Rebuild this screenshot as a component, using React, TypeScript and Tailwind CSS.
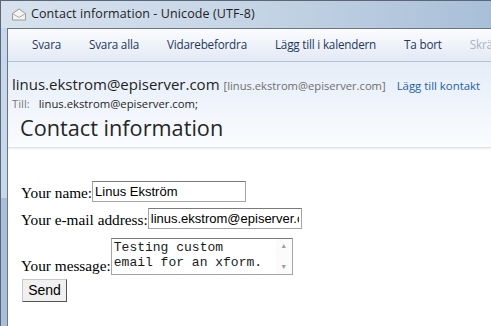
import React from "react"

const ui = { fontFamily: '"Open Sans", "Noto Sans", sans-serif' }
const serif = { fontFamily: '"Liberation Serif", serif' }
const sans = { fontFamily: '"Liberation Sans", Arial, sans-serif' }

function Envelope() {
  return (
    <svg width="16" height="13" viewBox="0 0 16 13">
      <path d="M1.5 5.5 L8 1 L14.5 5.5 L14.5 12 L1.5 12 Z" fill="#f4f4f2" stroke="#9a9a96" strokeWidth="1" />
      <path d="M1.5 5.5 L8 9.5 L14.5 5.5" fill="none" stroke="#a8a8a4" strokeWidth="1" />
    </svg>
  )
}

const tools = ["Svara", "Svara alla", "Vidarebefordra", "Lägg till i kalendern", "Ta bort"]

export default function App() {
  return (
    <div className="w-[491px] h-[326px] overflow-hidden flex flex-col bg-[#c9d8ea] border-l border-t border-[#5b6677]" style={ui}>
      {/* title bar */}
      <div className="h-[27px] flex items-center pl-[10px] bg-gradient-to-r from-[#d7e2ee] via-[#c6d5e6] to-[#a9bfd8] shrink-0">
        <Envelope />
        <span className="ml-[4px] text-[12.5px] text-[#1e1e1e] tracking-[0.1px]">Contact information - Unicode (UTF-8)</span>
      </div>

      <div className="flex flex-1 min-h-0">
        {/* left frame */}
        <div className="w-[6px] shrink-0 flex flex-col">
          <div className="h-[170px] bg-[#c8d8ec]" />
          <div className="flex-1 bg-[#a8bedb]" />
        </div>

        <div className="flex-1 flex flex-col border-l border-t border-[#6b7584] bg-white min-w-0">
          {/* toolbar */}
          <div className="h-[33px] flex items-center pl-[24px] gap-[28px] whitespace-nowrap text-[11.7px] tracking-[-0.2px] text-[#1e395b] bg-gradient-to-b from-[#fbfcfe] to-[#e3eaf4] border-b border-[#b6c3d4] shrink-0 overflow-hidden">
            {tools.map(t => (
              <span key={t}>{t}</span>
            ))}
            <span className="text-[#a9b4c2]">Skräp</span>
          </div>

          {/* header */}
          <div className="h-[86px] shrink-0 bg-gradient-to-b from-[#e5edf8] to-[#fafcfe] border-b border-[#dfe3e8] shadow-[0_1px_2px_rgba(0,0,0,0.08)] pl-[4px] pt-[12px] whitespace-nowrap overflow-hidden">
            <div className="flex items-baseline">
              <span className="text-[15px] text-[#1e1e1e] leading-[20px]">linus.ekstrom@episerver.com</span>
              <span className="ml-[4px] text-[11.2px] text-[#6d6d6d]">[linus.ekstrom@episerver.com]</span>
              <span className="ml-[11px] text-[11.4px] text-[#1f5fa6]">Lägg till kontakt</span>
            </div>
            <div className="flex items-baseline text-[11.3px] leading-[16px] mt-[1px]">
              <span className="text-[#7a7a7a]">Till:</span>
              <span className="ml-[9px] text-[#1e1e1e]">linus.ekstrom@episerver.com;</span>
            </div>
            <div className="pl-[8px] text-[21.7px] text-[#262626] leading-[30px] mt-[1px]">Contact information</div>
          </div>

          {/* content */}
          <div className="flex-1 pl-[13px] pt-[33px] text-[15.3px] text-black" style={serif}>
            <div className="flex items-end h-[21px]">
              <span className="leading-[18px]">Your name:</span>
              <input
                readOnly
                value="Linus Ekström"
                className="w-[154px] h-[21px] border border-[#a5a5a5] border-t-[#7a7a7a] px-[2px] text-[13px] outline-none"
                style={sans}
              />
            </div>
            <div className="flex items-end h-[21px] mt-[6px]">
              <span className="leading-[18px]">Your e-mail address:</span>
              <input
                readOnly
                value="linus.ekstrom@episerver.com"
                className="w-[154px] h-[21px] border border-[#a5a5a5] border-t-[#7a7a7a] px-[2px] text-[13px] outline-none"
                style={sans}
              />
            </div>
            <div className="flex items-end mt-[9px]">
              <span className="leading-[18px]">Your message:</span>
              <div className="w-[182px] h-[37px] border border-[#a5a5a5] border-t-[#7a7a7a] flex bg-white">
                <div className="flex-1 pl-[2px] pt-[1px] text-[13px] leading-[15px] text-[#1a1a1a] whitespace-pre" style={{ fontFamily: '"Liberation Mono", "Courier New", monospace' }}>
                  {"Testing custom\nemail for an xform."}
                </div>
                <div className="w-[16px] flex flex-col items-center justify-between py-[3px] text-[#a0a0a0] text-[7px] leading-[8px] bg-[#fbfbfb]">
                  <span>▲</span>
                  <span>▼</span>
                </div>
              </div>
            </div>
            <div className="mt-[4px] pl-[1px]">
              <button
                className="w-[45px] h-[23px] bg-[#f0f0f0] border border-[#c8c8c8] border-r-[#555] border-b-[#555] text-[14px] text-black"
                style={sans}
              >
                Send
              </button>
            </div>
          </div>
        </div>
      </div>
    </div>
  )
}
